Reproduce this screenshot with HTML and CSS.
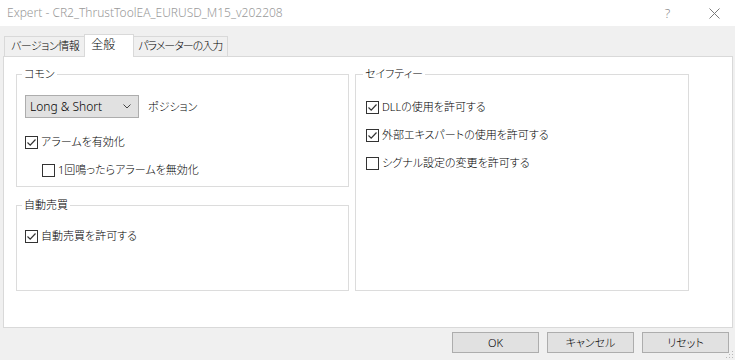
FILE: index.html
```html
<!DOCTYPE html>
<html lang="ja">
<head>
<meta charset="utf-8">
<title>Expert</title>
<link rel="stylesheet" href="styles.css">
</head>
<body>
<div class="window">
  <div class="titlebar">
    <span class="title">Expert - CR2_ThrustToolEA_EURUSD_M15_v202208</span>
    <div class="tb-buttons">
      <span class="help">?</span>
      <span class="close"><svg width="11" height="11" viewBox="0 0 11 11"><path d="M0.5 0.5 L10.5 10.5 M10.5 0.5 L0.5 10.5" stroke="#7a7a7a" stroke-width="1" fill="none"/></svg></span>
    </div>
  </div>

  <div class="tabs">
    <div class="tab">バージョン情報</div>
    <div class="tab active">全般</div>
    <div class="tab tab-params">パラメーターの入力</div>
  </div>

  <div class="panel">
    <div class="col">
      <fieldset class="group g-common">
        <legend>コモン</legend>
        <div class="select-row">
          <div class="select">
            <span>Long &amp; Short</span>
            <svg width="8" height="5" viewBox="0 0 8 5"><path d="M0.5 0.5 L4 4 L7.5 0.5" stroke="#444" stroke-width="1" fill="none"/></svg>
          </div>
          <span class="select-label">ポジション</span>
        </div>
        <label class="check"><span class="box"><svg width="11" height="11" viewBox="0 0 11 11"><path d="M1.5 5.5 L4.2 8.2 L9.5 2.5" stroke="#333" stroke-width="1.2" fill="none"/></svg></span>アラームを有効化</label>
        <label class="check indent"><span class="box"></span>1回鳴ったらアラームを無効化</label>
      </fieldset>
      <fieldset class="group g-auto">
        <legend>自動売買</legend>
        <label class="check"><span class="box"><svg width="11" height="11" viewBox="0 0 11 11"><path d="M1.5 5.5 L4.2 8.2 L9.5 2.5" stroke="#333" stroke-width="1.2" fill="none"/></svg></span>自動売買を許可する</label>
      </fieldset>
    </div>
    <div class="col">
      <fieldset class="group g-safety">
        <legend>セイフティー</legend>
        <label class="check"><span class="box"><svg width="11" height="11" viewBox="0 0 11 11"><path d="M1.5 5.5 L4.2 8.2 L9.5 2.5" stroke="#333" stroke-width="1.2" fill="none"/></svg></span>DLLの使用を許可する</label>
        <label class="check"><span class="box"><svg width="11" height="11" viewBox="0 0 11 11"><path d="M1.5 5.5 L4.2 8.2 L9.5 2.5" stroke="#333" stroke-width="1.2" fill="none"/></svg></span>外部エキスパートの使用を許可する</label>
        <label class="check"><span class="box"></span>シグナル設定の変更を許可する</label>
      </fieldset>
    </div>
  </div>

  <div class="footer">
    <button class="btn">OK</button>
    <button class="btn">キャンセル</button>
    <button class="btn">リセット</button>
  </div>

  <svg class="grip" width="8" height="8" viewBox="0 0 8 8">
    <rect x="6" y="0" width="1" height="1" fill="#b8b8b8"/>
    <rect x="3" y="3" width="1" height="1" fill="#b8b8b8"/>
    <rect x="6" y="3" width="1" height="1" fill="#b8b8b8"/>
    <rect x="0" y="6" width="1" height="1" fill="#b8b8b8"/>
    <rect x="3" y="6" width="1" height="1" fill="#b8b8b8"/>
    <rect x="6" y="6" width="1" height="1" fill="#b8b8b8"/>
  </svg>
</div>
</body>
</html>
```

FILE: styles.css
```css
* { box-sizing: border-box; }

html, body {
  margin: 0;
  padding: 0;
  background: #f0f0f0;
}

body {
  font-family: "Noto Sans", "Noto Sans CJK JP", sans-serif;
  font-size: 11px;
  font-weight: 300;
  line-height: 16px;
  color: #000;
  font-feature-settings: "palt";
}

.window {
  position: relative;
  width: 735px;
  height: 360px;
  background: #f0f0f0;
}

.titlebar {
  height: 26px;
  background: #fff;
  display: flex;
  align-items: center;
  justify-content: space-between;
  padding-left: 7px;
}

.title {
  color: #999;
  font-size: 12px;
}

.tb-buttons {
  display: flex;
  align-items: center;
  height: 100%;
}

.help {
  color: #888;
  font-size: 13px;
  width: 46px;
  text-align: center;
  padding-left: 3px;
}

.close {
  width: 46px;
  display: flex;
  justify-content: center;
  align-items: center;
  padding-left: 4px;
}

.tabs {
  height: 30px;
  display: flex;
  align-items: flex-end;
  padding-left: 4px;
}

.tab {
  height: 20px;
  padding: 0 7px 0 6px;
  line-height: 18px;
  border: 1px solid #d9d9d9;
  border-bottom: none;
  background: #f0f0f0;
  margin-right: -1px;
  white-space: nowrap;
  letter-spacing: -0.5px;
}

.tab.tab-params {
  padding: 0 5px;
  letter-spacing: -1px;
}

.tab.active {
  position: relative;
  z-index: 1;
  height: 23px;
  margin: 0 -2px -1px -2px;
  padding: 1px 18px 0 6px;
  background: #fff;
  line-height: 18px;
  font-size: 12px;
  letter-spacing: 0;
}

.panel {
  margin: 0 2px 0 3px;
  height: 272px;
  background: #fff;
  border: 1px solid #d9d9d9;
  display: grid;
  grid-template-columns: 333px 334px;
  column-gap: 6px;
  align-items: stretch;
  padding: 9px 0 0 12px;
  align-content: start;
}

.col {
  display: flex;
  flex-direction: column;
}

.group {
  margin: 0;
  border: 1px solid #dcdcdc;
  padding: 0 0 0 8px;
  min-width: 0;
}

.group legend {
  padding: 0 2px;
  margin-left: -3px;
  line-height: 16px;
}

.g-common {
  padding-top: 13px;
  padding-bottom: 8px;
}

.g-auto {
  margin-top: 10px;
  padding-top: 15px;
  padding-bottom: 46px;
}

.g-safety {
  flex: 1;
  padding-left: 10px;
  padding-top: 17px;
}

.select-row {
  display: flex;
  align-items: center;
  height: 23px;
}

.select {
  width: 114px;
  height: 23px;
  background: #e1e1e1;
  border: 1px solid #adadad;
  display: flex;
  align-items: center;
  justify-content: space-between;
  padding: 0 7px 0 4px;
  font-size: 12px;
}

.select-label {
  margin-left: 9px;
}

.check {
  display: flex;
  align-items: center;
  height: 16px;
  margin-top: 12px;
  white-space: nowrap;
}

.g-common .select-row + .check {
  margin-top: 16px;
}

.g-auto .check:first-of-type,
.g-safety .check:first-of-type {
  margin-top: 0;
}

.check.indent {
  margin-left: 17px;
}

.box {
  width: 13px;
  height: 13px;
  border: 1px solid #333;
  background: #fff;
  margin-right: 3px;
  display: flex;
  align-items: center;
  justify-content: center;
  flex: none;
}

.box svg { display: block; }

.footer {
  display: flex;
  justify-content: flex-end;
  gap: 8px;
  padding: 4px 6px 0 0;
}

.btn {
  width: 87px;
  height: 21px;
  background: #e1e1e1;
  border: 1px solid #adadad;
  font: inherit;
  color: #000;
  padding: 0;
  line-height: 18px;
}

.grip {
  position: absolute;
  right: 1px;
  bottom: 1px;
}
```
